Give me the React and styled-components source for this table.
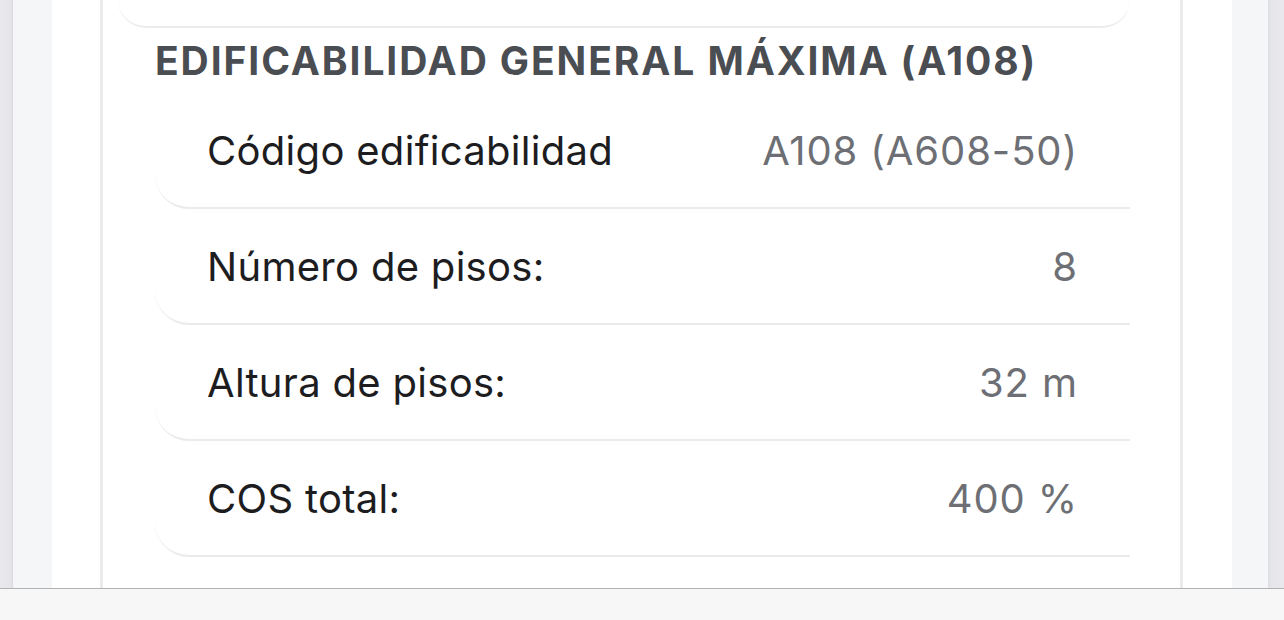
import React from "react";
import styled, { createGlobalStyle } from "styled-components";

const GlobalStyle = createGlobalStyle`
  html, body {
    margin: 0;
    padding: 0;
    background: #f7f7f7;
    font-family: Inter, "Noto Sans", "Liberation Sans", sans-serif;
  }
`;

const Screen = styled.div`
  width: 1284px;
  height: 620px;
  display: flex;
  flex-direction: column;
  overflow: hidden;
`;

const Frame = styled.div`
  flex: 1;
  display: flex;
  flex-direction: row;
  min-height: 0;
`;

const Edge = styled.div`
  width: ${(p) => p.width}px;
  background: ${(p) =>
    p.side === "left"
      ? "linear-gradient(to right, #e9e9ed 0%, #e6e6ea 80%, #d9d9de 100%)"
      : "linear-gradient(to right, #dcdce1 0%, #e6e6ea 20%, #e9e9ed 100%)"};
`;

const Gutter = styled.div`
  width: ${(p) => p.width}px;
  background: #f5f6f8;
`;

const Page = styled.div`
  flex: 1;
  background: #ffffff;
  padding: 0 49px 0 48px;
  display: flex;
`;

const Panel = styled.div`
  flex: 1;
  border-left: 3px solid #ebebec;
  border-right: 3px solid #ebebec;
  display: flex;
  flex-direction: column;
`;

const PrevCard = styled.div`
  height: 26px;
  margin: 0 50px 0 15px;
  border-bottom: 2px solid #ececef;
  border-bottom-left-radius: 34px;
  border-bottom-right-radius: 34px;
`;

const Section = styled.section`
  margin: 0 50px 0 52px;
  display: flex;
  flex-direction: column;
`;

const Heading = styled.h2`
  margin: 0;
  height: 65px;
  display: flex;
  align-items: center;
  font-size: 39px;
  font-weight: 700;
  color: #4a4d52;
  letter-spacing: 1.9px;
  white-space: nowrap;
`;

const Row = styled.div`
  height: 114px;
  display: flex;
  align-items: center;
  justify-content: space-between;
  padding: 0 52px 0 52px;
  border-bottom: 2px solid #ebebee;
  border-bottom-left-radius: 34px;
`;

const Label = styled.span`
  font-size: 40px;
  color: #1d1d1f;
  letter-spacing: 0.3px;
  white-space: nowrap;
`;

const Value = styled.span`
  font-size: 40px;
  color: #6d6f74;
  letter-spacing: 0.9px;
  white-space: nowrap;
`;

const BottomBar = styled.div`
  height: 31px;
  border-top: 1px solid #b2b2b2;
  background: #f7f7f7;
`;

const rows = [
  ["Código edificabilidad", "A108 (A608-50)"],
  ["Número de pisos:", "8"],
  ["Altura de pisos:", "32 m"],
  ["COS total:", "400 %"],
];

const App = () => {
  return (
    <Screen>
      <GlobalStyle />
      <Frame>
        <Edge side="left" width={13} />
        <Gutter width={39} />
        <Page>
          <Panel>
            <PrevCard />
            <Section>
              <Heading>EDIFICABILIDAD GENERAL MÁXIMA (A108)</Heading>
              {rows.map(([label, value]) => (
                <Row key={label}>
                  <Label>{label}</Label>
                  <Value>{value}</Value>
                </Row>
              ))}
            </Section>
          </Panel>
        </Page>
        <Gutter width={36} />
        <Edge side="right" width={16} />
      </Frame>
      <BottomBar />
    </Screen>
  );
};

export default App;
